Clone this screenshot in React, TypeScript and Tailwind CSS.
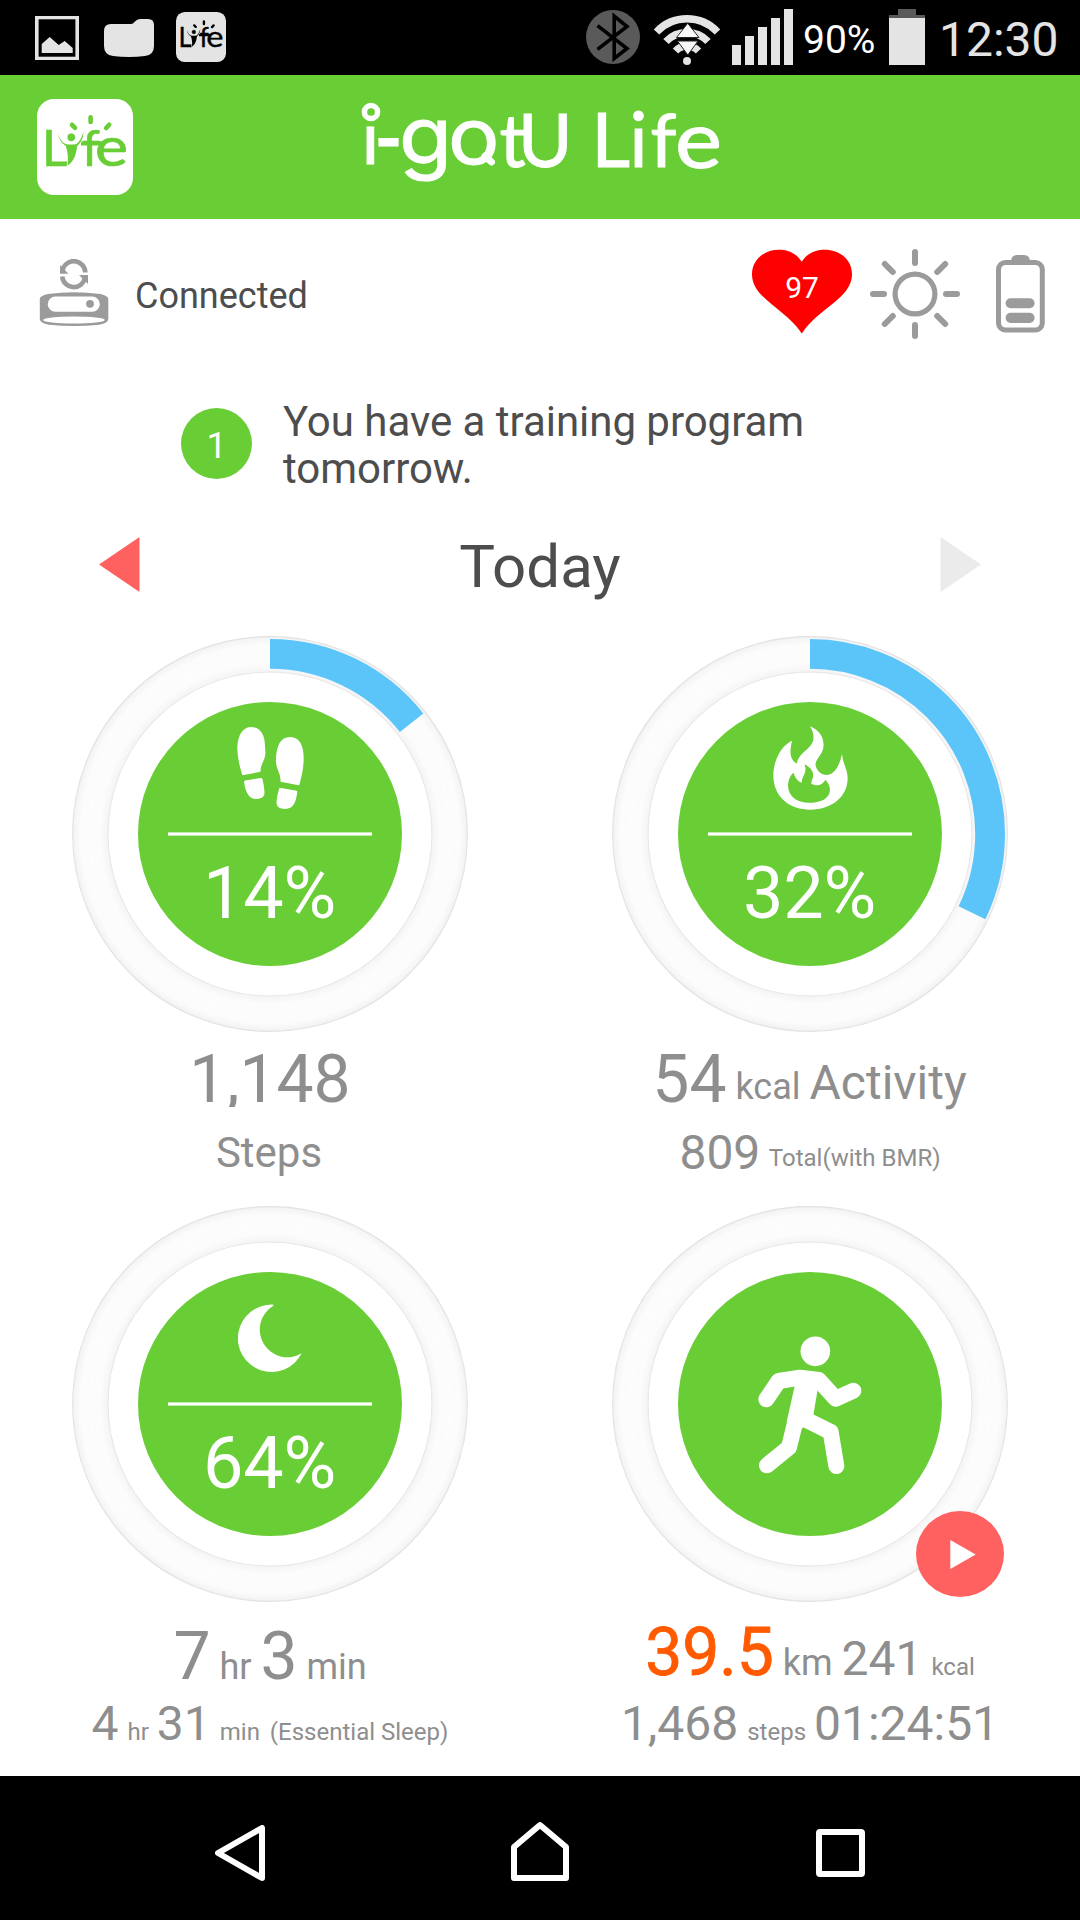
import React from 'react';

interface LifeLogoProps {
  size: number;
  background: string;
  color: string;
}

const LifeLogo: React.FC<LifeLogoProps> = ({ size, background, color }) => (
  <svg className="overflow-visible" width={size} height={size} viewBox="0 0 96 96" fontFamily="Lato, sans-serif">
    <rect width="96" height="96" rx="17" fill={background} />
    <g fill={color} stroke={color} strokeWidth="0.700">
      <text x="5" y="66.500" fontSize="50">L</text>
      <text x="45" y="66.500" fontSize="51">f</text>
      <text x="58" y="67" fontSize="54" textLength="33" lengthAdjust="spacingAndGlyphs">e</text>
    </g>
    <path d="M44 42.300h23.500l-5 4.300H44z" fill={color} />
    <path
      d="M20.800 34.500c1.500 5 4.500 9 7.700 10.500 3 .8 8 .8 11 0 3-2 5.300-6.500 7-12.300 0 5.500-2 10.500-6.300 14.300-1 8-3.200 15.500-9.700 19.700 1-7.500 .3-14-1.700-19.700-4.500-3-7.200-7.500-8-12.500z"
      fill={color}
      stroke={background}
      strokeWidth="1.400"
      paintOrder="stroke"
    />
    <circle cx="34.300" cy="38.300" r="4.300" fill={color} stroke={background} strokeWidth="0.800" />
    <path d="M53.600 18.200v4.800M35 25.800l3 3M72.200 25.800l-3 3.200" stroke={color} strokeWidth="4.600" strokeLinecap="round" />
  </svg>
);

const Wordmark = () => (
  <svg
    className="overflow-visible"
    width="364"
    height="90"
    viewBox="362 100 364 90"
    fill="#fff"
    stroke="#fff"
    strokeWidth="1"
    fontFamily="Lato, sans-serif"
  >
    <text x="361.500" y="163.700" fontSize="74">i</text>
    <text x="375.500" y="164" fontSize="74" strokeWidth="3" textLength="26" lengthAdjust="spacingAndGlyphs">-</text>
    <text x="399" y="163.500" fontSize="79" fontFamily="Inter, sans-serif" textLength="53" lengthAdjust="spacingAndGlyphs">g</text>
    <text x="448" y="163.500" fontSize="77" fontFamily="Inter, sans-serif" textLength="51.500" lengthAdjust="spacingAndGlyphs">o</text>
    <path d="M485 156l6.500 6" strokeWidth="7" strokeLinecap="round" />
    <text x="499.500" y="166.500" fontSize="73">t</text>
    <text x="518" y="166.500" fontSize="74">U</text>
    <circle cx="371" cy="112" r="6.600" fill="#69cd36" strokeWidth="5.500" />
    <text x="591.500" y="166.700" fontSize="75">L</text>
    <text x="629.500" y="166.700" fontSize="75">i</text>
    <text x="650.500" y="166.700" fontSize="74">f</text>
    <text x="675" y="167.500" fontSize="80" textLength="47" lengthAdjust="spacingAndGlyphs">e</text>
  </svg>
);

const StatusBar = () => (
  <div className="flex h-[75px] items-start bg-black text-[#e4e4e4]">
    <svg className="ml-[35px] mt-[16px]" width="44" height="44" viewBox="0 0 44 44">
      <rect x="1.800" y="1.500" width="40.400" height="41" fill="none" stroke="#e4e4e4" strokeWidth="3.600" />
      <path d="M6.700 28l8-7 9 8 6-4 8 7v5H6.700z" fill="#e4e4e4" />
    </svg>
    <svg className="ml-[25px] mt-[19px]" width="50" height="38" viewBox="0 0 50 38">
      <path d="M0 12q0-7 7-7h20q2 0 4-2.500T36 0h8q6 0 6 6v21q0 9-9 10-16 2-32 0-9-1-9-10z" fill="#e4e4e4" />
    </svg>
    <div className="ml-[22px] mt-[12px]">
      <LifeLogo size={50} background="#e4e4e4" color="#000" />
    </div>

    <svg className="ml-[360px] mt-[10px]" width="54" height="54" viewBox="586 10 54 54">
      <circle cx="613" cy="37" r="27" fill="#5a5a5a" />
      <path d="M597.500 25.700L627 48.500 614.200 58.500V16L627 26.500 597.500 49.300" fill="none" stroke="#000" strokeWidth="3.600" />
    </svg>
    <svg className="ml-[13px] mt-[9px]" width="68" height="56" viewBox="653 9 68 56">
      <g fill="none" stroke="#e4e4e4" strokeWidth="7.500">
        <path d="M656.500 32a42 42 0 0 1 61 0" />
        <path d="M666 41.500a29 29 0 0 1 42 0" />
        <path d="M675.500 51a16 16 0 0 1 23 0" />
      </g>
      <path d="M687.700 23.300L676.500 37.500H699zM677.500 41H698l-10.200 14z" fill="#f8f8f8" stroke="#222" strokeWidth="1" />
      <circle cx="687" cy="61" r="4" fill="#e4e4e4" />
    </svg>
    <div className="ml-[11px] mt-[9px] flex h-[56px] items-end gap-[4px]">
      <div className="h-[20px] w-[9px] bg-[#e4e4e4]" />
      <div className="h-[29px] w-[9px] bg-[#e4e4e4]" />
      <div className="h-[38px] w-[9px] bg-[#e4e4e4]" />
      <div className="h-[47px] w-[9px] bg-[#e4e4e4]" />
      <div className="h-[56px] w-[9px] bg-[#e4e4e4]" />
    </div>
    <div className="ml-[10px] mt-[20px] w-[86px] text-[39px] leading-[40px] text-white">90%</div>
    <div className="mt-[9px] flex w-[36px] flex-col items-center">
      <div className="h-[6px] w-[18px] bg-[#5a5a5a]" />
      <div className="h-[3px] w-full bg-[#5a5a5a]" />
      <div className="h-[47px] w-full bg-[#e4e4e4]" />
    </div>
    <div className="ml-[14px] mt-[15px] whitespace-nowrap text-[48px] leading-[50px]">12:30</div>
  </div>
);

const Header = () => (
  <div className="flex h-[144px] bg-[#69cd36]">
    <div className="ml-[37px] mt-[24px] w-[96px]">
      <LifeLogo size={96} background="#fff" color="#69cd36" />
    </div>
    <div className="ml-[229px] mt-[25px]">
      <Wordmark />
    </div>
  </div>
);

const DeviceRow = () => (
  <div className="flex h-[150px] items-center">
    <svg className="ml-[39px] mt-[2px]" width="70" height="72" viewBox="39 258 70 72">
      <g fill="none" stroke="#9b9b9b" strokeWidth="4.600">
        <path d="M62.500 269.500a11.500 11.500 0 0 1 22.800 2" />
        <path d="M84.800 277.500a11.500 11.500 0 0 1-22.600-2" />
      </g>
      <path d="M60 264v8.800h8.500zM88 283V274h-9z" fill="#9b9b9b" />
      <path d="M39.800 298q0-3 8-5 26-3.500 52.500 0 8 2 8 5v20q0 4-9 5.800-25 2.400-50.500 0-9-1.800-9-5.800z" fill="#9b9b9b" />
      <rect x="47.800" y="295.600" width="52" height="15.200" rx="7.600" fill="#fff" />
      <circle cx="90" cy="302.800" r="3.900" fill="#9b9b9b" />
      <ellipse cx="74" cy="319" rx="30.800" ry="3.600" fill="#fff" />
    </svg>
    <div className="ml-[26px] mt-[4px] flex-1 text-[36px] leading-none text-[#4d4d4d]">Connected</div>
    <div className="relative mb-[4px] h-[86px] w-[100px]">
      <svg width="100" height="85" viewBox="0 0 100 86" preserveAspectRatio="none">
        <path d="M49.800 13C44 4 36 .7 27 .7 12 .7 0 11 0 25.500 0 50 33 60 49.800 85.500 66 60 100 50 100 25.500 100 11 88 .7 73 .7 64 .7 55 4 49.800 13z" fill="#f00" />
      </svg>
      <div className="absolute inset-0 flex justify-center pt-[24px] text-[30px] leading-none text-white">97</div>
    </div>
    <svg className="ml-[17px]" width="92" height="92" viewBox="-46 -46 92 92" fill="none" stroke="#9b9b9b">
      <circle r="19.900" strokeWidth="5.200" />
      <path
        d="M0-42v11M0 42V31M-42 0h11M42 0H31M-30.200-30l8 8M30.200 30l-8-8M-30.200 30l8-8M30.200-30l-8 8"
        strokeWidth="6"
        strokeLinecap="round"
      />
    </svg>
    <svg className="ml-[34px] mr-[35px]" width="50" height="78" viewBox="995 255 50 78">
      <rect x="998.500" y="262.500" width="43.800" height="67.600" rx="7" fill="none" stroke="#9b9b9b" strokeWidth="5" />
      <path d="M1011 262q0-7 6-7h7q6 0 6 7z" fill="#9b9b9b" />
      <rect x="1005.600" y="298.300" width="29" height="10" rx="5" fill="#9b9b9b" />
      <rect x="1005.600" y="312.700" width="29" height="10.200" rx="5.100" fill="#9b9b9b" />
    </svg>
  </div>
);

const Notice = () => (
  <div className="flex h-[138px] items-start text-[#4d4d4d]">
    <div className="ml-[181px] mt-[39px] flex h-[71px] w-[71px] items-center justify-center rounded-full bg-[#69cd36] pt-[4px] text-[36px] leading-none text-white">
      1
    </div>
    <div className="ml-[31px] mt-[29px] w-[560px] text-[42px] leading-[47px] tracking-[-0.03px]">
      You have a training program tomorrow.
    </div>
  </div>
);

const DayPicker = () => (
  <div className="flex h-[114px] items-center justify-between px-[99px]">
    <svg width="41" height="55" viewBox="0 0 41 55">
      <path d="M0 27.500L40.500 0v55z" fill="#ff6161" />
    </svg>
    <div className="pt-[5px] text-[60px] leading-none text-[#4d4d4d]">Today</div>
    <svg width="41" height="55" viewBox="0 0 41 55">
      <path d="M41 27.500L.5 0v55z" fill="#ebebeb" />
    </svg>
  </div>
);

const StepsIcon = () => (
  <svg width="67" height="82" viewBox="530 659 200 238" preserveAspectRatio="none" fill="#fff">
    <path d="M546 799C535 765 531 740 531 718c1-36 17-59 41-59 27 0 40 22 41 48l2 28c-1 20-15 32-15 54z" />
    <path d="M551 818q0-3 3-4l48-7q3 0 4 3c4 18 6 30 6 42-1 11-12 16-28 16-19-2-29-20-33-50z" />
    <path d="M714 828l-54-10c1-26-14-36-14-63 2-42 13-67 43-67 27 0 40 24 40 62 0 32-7 55-13 77z" />
    <path d="M657 835l51 9q3 1 2 4c-4 30-12 49-36 49-17 0-26-7-26-18 1-18 4-30 9-44z" />
  </svg>
);

const FlameIcon = () => (
  <svg width="75" height="84" viewBox="518 657 224 244" preserveAspectRatio="none" fill="#fff">
    <path
      fillRule="evenodd"
      d="M628 658C655 668 669 688 669 712 669 740 645 750 645 770 648 785 660 799 680 799 703 798 718 768 724 738 728 770 741 785 741 808 741 865 690 900 629 900 570 900 519 865 519 800 519 755 545 712 575 700 568 730 566 752 589 766 598 728 639 725 639 690 639 678 635 668 628 658ZM612 768C628 776 638 787 638 800 638 812 630 818 633 825 650 835 668 826 674 813 684 823 688 832 688 842 688 868 660 880 625 880 590 880 563 862 563 830 563 815 570 800 579 793 583 805 590 818 604 822 604 800 622 795 612 768Z"
    />
  </svg>
);

const MoonIcon = () => (
  <svg width="64" height="68" viewBox="534 312 192 204" fill="#fff">
    <path d="M640 314A101 101 0 1 0 725 460 83 83 0 1 1 640 317z" />
  </svg>
);

const RunnerIcon = () => (
  <svg width="104" height="139" viewBox="474 408 312 417" fill="#fff">
    <circle cx="646" cy="454" r="44.500" />
    <path d="M588 540h70l-18 105-34 41-46-20z" />
    <path
      d="M499 598l37-55 64-10 56 7 51 56 53-24M592 640l-25 102-66 54M610 655l82 41 17 102"
      fill="none"
      stroke="#fff"
      strokeWidth="48"
      strokeLinecap="round"
      strokeLinejoin="round"
    />
  </svg>
);

interface GaugeProps {
  progress?: number;
  children: React.ReactNode;
}

const Gauge: React.FC<GaugeProps> = ({ progress = 0, children }) => (
  <div className="relative h-[396px] w-[396px]">
    <svg width="396" height="396" viewBox="-198 -198 396 396">
      <defs>
        <radialGradient id="track" gradientUnits="userSpaceOnUse" cx="0" cy="0" r="198">
          <stop offset="0.815" stopColor="#e1e1e1" />
          <stop offset="0.823" stopColor="#f5f5f5" />
          <stop offset="0.860" stopColor="#fcfcfc" />
          <stop offset="0.955" stopColor="#fcfcfc" />
          <stop offset="0.990" stopColor="#f4f4f4" />
          <stop offset="1" stopColor="#dadada" />
        </radialGradient>
      </defs>
      <circle r="179.700" fill="none" stroke="url(#track)" strokeWidth="36.400" />
      <circle r="180" fill="none" stroke="#fff" strokeWidth="0.800" />
      {progress > 0 && (
        <circle
          r="180.100"
          fill="none"
          stroke="#5bc5fa"
          strokeWidth="29.800"
          pathLength={100}
          strokeDasharray={`${progress} 100`}
          transform="rotate(-90)"
        />
      )}
    </svg>
    <div className="absolute left-[66px] top-[66px] flex h-[264px] w-[264px] flex-col items-center rounded-full bg-[#69cd36] text-white">
      {children}
    </div>
  </div>
);

const GaugeContent: React.FC<{ icon: React.ReactNode; percent: string }> = ({ icon, percent }) => (
  <>
    <div className="mt-[25px] flex h-[82px] items-center justify-center">{icon}</div>
    <div className="mt-[23px] h-[4px] w-[204px] border-y border-white/60 bg-white bg-clip-padding" />
    <div className="mr-[1px] mt-[22px] text-[72px] leading-none tracking-[-0.3px]">{percent}</div>
  </>
);

export default function App() {
  return (
    <div className="flex h-[1920px] w-[1080px] flex-col overflow-hidden bg-white font-['Roboto',sans-serif]">
      <StatusBar />
      <Header />
      <DeviceRow />
      <Notice />
      <DayPicker />

      <div className="grid h-[1155px] grid-cols-2 grid-rows-[570px_570px] whitespace-pre text-[#8e8e8e]">
        <div className="flex flex-col items-center pt-[15px]">
          <Gauge progress={14.4}>
            <GaugeContent icon={<StepsIcon />} percent="14%" />
          </Gauge>
          <div className="mt-[15px] h-[60px] overflow-hidden text-[66px] leading-none">1,148</div>
          <div className="mr-[2px] mt-[25px] text-[42px] leading-none">Steps</div>
        </div>

        <div className="flex flex-col items-center pt-[15px]">
          <Gauge progress={32.2}>
            <GaugeContent icon={<FlameIcon />} percent="32%" />
          </Gauge>
          <div className="mr-[1px] mt-[15px] flex h-[66px] items-baseline leading-none">
            <span className="text-[66px]">54</span>
            <span className="-translate-y-[3px] text-[36px]"> kcal </span>
            <span className="-translate-y-[3px] text-[48px]">Activity</span>
          </div>
          <div className="mt-[16px] flex items-baseline leading-none">
            <span className="text-[48px]">809</span>
            <span className="ml-[3px] -translate-y-[3px] text-[24px]"> Total(with BMR)</span>
          </div>
        </div>

        <div className="flex flex-col items-center pt-[15px]">
          <Gauge>
            <GaugeContent icon={<MoonIcon />} percent="64%" />
          </Gauge>
          <div className="mt-[22px] flex h-[66px] items-baseline leading-none">
            <span className="text-[66px]">7</span>
            <span className="text-[36px]"> hr </span>
            <span className="text-[66px]">3</span>
            <span className="text-[36px]"> min</span>
          </div>
          <div className="mt-[10px] flex items-baseline leading-none">
            <span className="text-[48px]">4</span>
            <span className="ml-[3px] mr-[2px] text-[24px]"> hr </span>
            <span className="text-[48px]">31</span>
            <span className="ml-[3px] text-[24px]"> min </span>
            <span className="ml-[4px] text-[24px]">(Essential Sleep)</span>
          </div>
        </div>

        <div className="flex flex-col items-center pt-[15px]">
          <div className="relative">
            <Gauge>
              <div className="mt-[64px]">
                <RunnerIcon />
              </div>
            </Gauge>
            <button className="absolute left-[304px] top-[305px] flex h-[86px] w-[88px] items-center rounded-[50%] bg-[#ff6161] pl-[34px]">
              <svg width="26" height="29" viewBox="0 0 26 29">
                <path d="M.3 0L25.700 14.500.3 29z" fill="#fff" />
              </svg>
            </button>
          </div>
          <div className="mt-[18px] flex h-[66px] items-baseline leading-none">
            <span className="text-[66px] text-[#ff5a00] [-webkit-text-stroke:0.8px_#ff5a00]">39.5</span>
            <span className="text-[36px]"> km </span>
            <span className="text-[48px]">241</span>
            <span className="ml-[3px] text-[24px]"> kcal</span>
          </div>
          <div className="mt-[14px] flex items-baseline leading-none">
            <span className="text-[48px]">1,468</span>
            <span className="ml-[3px] mr-[2px] text-[24px]"> steps </span>
            <span className="text-[48px]">01:24:51</span>
          </div>
        </div>
      </div>

      <div className="flex h-[144px] bg-black">
        <svg className="ml-[215px] mt-[49px]" width="50" height="57" viewBox="215 1825 50 57" fill="none" stroke="#fff" strokeWidth="6" strokeLinejoin="round">
          <path d="M218 1853l44-25v50z" />
        </svg>
        <svg className="ml-[246px] mt-[45px]" width="58" height="61" viewBox="511 1821 58 61" fill="none" stroke="#fff" strokeWidth="6" strokeLinejoin="round">
          <path d="M514 1878v-31l26-22 26 22v31z" />
        </svg>
        <div className="ml-[247px] mt-[53px] h-[48px] w-[49px] rounded-[4px] border-[6px] border-white" />
      </div>
    </div>
  );
}
